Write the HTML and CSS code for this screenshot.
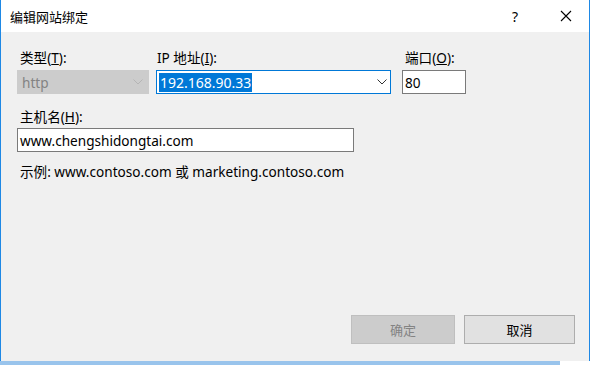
FILE: index.html
```html
<!DOCTYPE html>
<html>
<head>
  <title>编辑网站绑定</title>
  <link rel="stylesheet" href="styles.css">
</head>
<body>
  <div class="window">
    <div class="titlebar">
      <span class="title">编辑网站绑定</span>
      <span class="help">?</span>
      <span class="close">
        <svg width="12" height="12" viewBox="0 0 12 12"><path d="M1 1L11 11M11 1L1 11" stroke="#000" stroke-width="1.1" fill="none"/></svg>
      </span>
    </div>
    <div class="content">
      <div class="row">
        <div class="field type-field">
          <label>类型(<u>T</u>):</label>
          <div class="select disabled">
            <span>http</span>
            <svg class="chev" width="10" height="6" viewBox="0 0 10 6"><path d="M0.5 0.5L5 5L9.5 0.5" stroke="#b5b5b5" fill="none"/></svg>
          </div>
        </div>
        <div class="field ip-field">
          <label>IP 地址(<u>I</u>):</label>
          <div class="select focused">
            <span class="selected">192.168.90.33</span>
            <svg class="chev" width="10" height="6" viewBox="0 0 10 6"><path d="M0.5 0.5L5 5L9.5 0.5" stroke="#333" fill="none"/></svg>
          </div>
        </div>
        <div class="field port-field">
          <label>端口(<u>O</u>):</label>
          <div class="input">80</div>
        </div>
      </div>
      <div class="field host-field">
        <label>主机名(<u>H</u>):</label>
        <div class="input">www.chengshidongtai.com</div>
      </div>
      <p class="hint">示例: www.contoso.com 或 marketing.contoso.com</p>
      <div class="buttons">
        <button class="btn" disabled>确定</button>
        <button class="btn">取消</button>
      </div>
    </div>
  </div>
  <div class="below"></div>
</body>
</html>
```

FILE: styles.css
```css
body {
  margin: 0;
  width: 591px;
  height: 365px;
  overflow: hidden;
  background: #ffffff;
  font-family: "Noto Sans", "Noto Sans CJK SC", sans-serif;
  font-size: 13.6px;
  color: #000;
}

.window {
  width: 588px;
  height: 361px;
  border-left: 1px solid #1e88e5;
  border-right: 1px solid #1e88e5;
  background: #f0f0f0;
  display: flex;
  flex-direction: column;
}

.titlebar {
  height: 32px;
  background: #fff;
  display: flex;
  align-items: center;
  padding-left: 9px;
}

.title {
  font-family: "Noto Sans CJK SC", sans-serif;
  font-size: 13px;
  flex: 1;
}

.help {
  width: 52px;
  text-align: center;
  font-size: 14px;
  margin-right: 2px;
}

.close {
  width: 46px;
  display: flex;
  justify-content: center;
}

.content {
  flex: 1;
  padding: 16px 14px 17px 16px;
  display: flex;
  flex-direction: column;
}

.row {
  display: flex;
}

.field label {
  display: block;
  height: 20px;
  line-height: 20px;
  padding-left: 3px;
  margin-bottom: 2px;
}

.type-field { width: 139px; }
.ip-field { width: 246px; }
.port-field { width: 64px; }

.ip-field label {
  padding-left: 1px;
}

.select,
.input {
  height: 22px;
  display: flex;
  align-items: center;
  padding: 0 2px;
  background: #fff;
  border: 1px solid #7a7a7a;
  font-size: 13.6px;
}

.select {
  justify-content: space-between;
  padding-right: 5px;
}

.select.disabled {
  width: 121px;
  background: #cccccc;
  border-color: #cccccc;
  color: #838383;
  padding-left: 4px;
}

.select.focused {
  width: 228px;
  padding-right: 3px;
  border-color: #0078d7;
}

.selected {
  background: #0078d7;
  color: #fff;
  padding: 0 1px;
  line-height: 19px;
  font-size: 14px;
}

.port-field .input {
  width: 58px;
}

.host-field {
  margin-top: 13px;
}

.host-field label {
  margin-bottom: 1px;
}

.host-field .input {
  width: 331px;
}

.hint {
  margin: 10px 0 0 3px;
  line-height: 20px;
}

.buttons {
  margin-top: auto;
  display: flex;
  justify-content: flex-end;
  gap: 9px;
}

.btn {
  width: 111px;
  height: 29px;
  font-family: "Noto Sans CJK SC", sans-serif;
  font-size: 13px;
  background: #e1e1e1;
  border: 1px solid #adadad;
  color: #000;
  padding: 0;
}

.btn:disabled {
  width: 104px;
  background: #cccccc;
  border-color: #bfbfbf;
  color: #838383;
}

.below {
  height: 4px;
  width: 560px;
  background: #99c4ec;
}
```
